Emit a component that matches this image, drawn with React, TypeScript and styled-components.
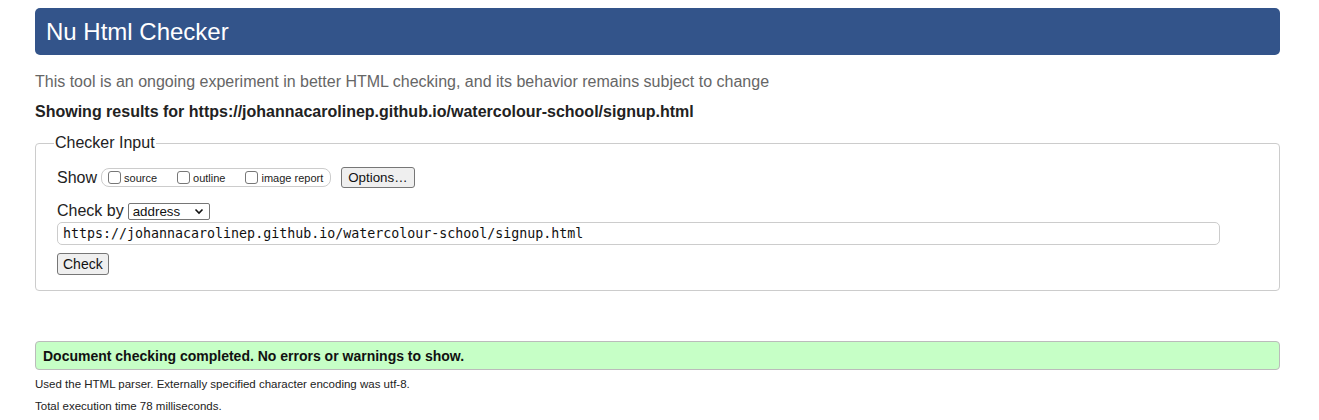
import React, { FC } from 'react';
import styled, { createGlobalStyle } from 'styled-components';

const GlobalStyle = createGlobalStyle`
  body {
    margin: 0;
    background: #fff;
    font-family: "Liberation Sans", Arial, sans-serif;
    color: #111;
  }
`;

const Page = styled.div`
  padding: 8px 39px 0 35px;
`;

const Header = styled.h1`
  margin: 0;
  height: 47px;
  line-height: 47px;
  padding-left: 11px;
  background: #33548a;
  border-radius: 5px;
  color: #fff;
  font-size: 24px;
  font-weight: normal;
`;

const Intro = styled.p`
  margin: 17px 0 0;
  font-size: 16px;
  line-height: 20px;
  color: #666;
`;

const Results = styled.p`
  margin: 10px 0 0;
  font-size: 16px;
  line-height: 20px;
  font-weight: bold;
  color: #222;
`;

const Fieldset = styled.fieldset`
  margin: 11px 0 0;
  padding: 14px 20px 15px 21px;
  border: 1px solid #ccc;
  border-radius: 4px;
  min-width: 0;
`;

const Legend = styled.legend`
  margin-left: -3px;
  padding: 0 1px;
  font-size: 16px;
  line-height: 20px;
  color: #222;
`;

const Row = styled.div<{ $top?: number }>`
  display: flex;
  align-items: center;
  margin-top: ${p => p.$top ?? 0}px;
  font-size: 16px;
  color: #222;
`;

const Label = styled.span`
  margin-right: 4px;
`;

const OptionGroup = styled.div`
  display: flex;
  align-items: center;
  height: 17px;
  padding: 0 7px 0 5px;
  border: 1px solid #ccc;
  border-radius: 8px;
  margin-right: 10px;
`;

const OptionLabel = styled.label<{ $gap?: number }>`
  display: flex;
  align-items: center;
  font-size: 11px;
  color: #222;
  margin-right: ${p => p.$gap ?? 0}px;
`;

const Box = styled.input`
  appearance: none;
  width: 13px;
  height: 13px;
  margin: 0 3px 0 1px;
  border: 1px solid #777;
  border-radius: 3px;
  background: #fff;
`;

const Button = styled.button`
  font-family: "Liberation Sans", Arial, sans-serif;
  font-size: 13.33px;
  height: 21px;
  padding: 0 6px;
  border: 1px solid #767676;
  border-radius: 3px;
  background: #efefef;
  color: #111;
`;

const Select = styled.div`
  display: flex;
  align-items: center;
  justify-content: space-between;
  width: 82px;
  height: 17px;
  box-sizing: border-box;
  padding: 0 5px 0 4px;
  border: 1px solid #767676;
  border-radius: 2px;
  font-size: 13.33px;
  color: #111;
`;

const UrlInput = styled.input`
  display: block;
  margin-top: 2px;
  width: 1163px;
  height: 23px;
  box-sizing: border-box;
  padding: 0 5px;
  border: 1px solid #ccc;
  border-radius: 5px;
  font-family: "DejaVu Sans Mono", "Liberation Mono", monospace;
  font-size: 13.3px;
  color: #111;
`;

const CheckButton = styled(Button)`
  display: block;
  margin-top: 8px;
  height: 22px;
  font-size: 14px;
  padding: 0 5px;
`;

const Success = styled.div`
  margin-top: 50px;
  height: 29px;
  box-sizing: border-box;
  padding-left: 7px;
  display: flex;
  align-items: center;
  background: #c6ffc6;
  border: 1px solid #bbb;
  border-radius: 4px;
  font-size: 14px;
  font-weight: bold;
  color: #111;
`;

const Note = styled.p<{ $top: number }>`
  margin: ${p => p.$top}px 0 0;
  font-size: 11.5px;
  line-height: 14px;
  color: #222;
`;

const Chevron: FC = () => (
  <svg width="10" height="7" viewBox="0 0 10 7">
    <path d="M1.5 1.5 L5 5 L8.5 1.5" fill="none" stroke="#111" strokeWidth="1.6" />
  </svg>
);

const App: FC = () => {
  const url = 'https://johannacarolinep.github.io/watercolour-school/signup.html';
  return (
    <Page>
      <GlobalStyle />
      <Header>Nu Html Checker</Header>
      <Intro>This tool is an ongoing experiment in better HTML checking, and its behavior remains subject to change</Intro>
      <Results>Showing results for {url}</Results>
      <Fieldset>
        <Legend>Checker Input</Legend>
        <Row>
          <Label>Show</Label>
          <OptionGroup>
            <OptionLabel $gap={19}><Box type="checkbox" />source</OptionLabel>
            <OptionLabel $gap={19}><Box type="checkbox" />outline</OptionLabel>
            <OptionLabel><Box type="checkbox" />image report</OptionLabel>
          </OptionGroup>
          <Button>Options…</Button>
        </Row>
        <Row $top={14}>
          <Label>Check by</Label>
          <Select>
            <span>address</span>
            <Chevron />
          </Select>
        </Row>
        <UrlInput defaultValue={url} />
        <CheckButton>Check</CheckButton>
      </Fieldset>
      <Success>Document checking completed. No errors or warnings to show.</Success>
      <Note $top={7}>Used the HTML parser. Externally specified character encoding was utf-8.</Note>
      <Note $top={8}>Total execution time 78 milliseconds.</Note>
    </Page>
  );
};

export default App;
